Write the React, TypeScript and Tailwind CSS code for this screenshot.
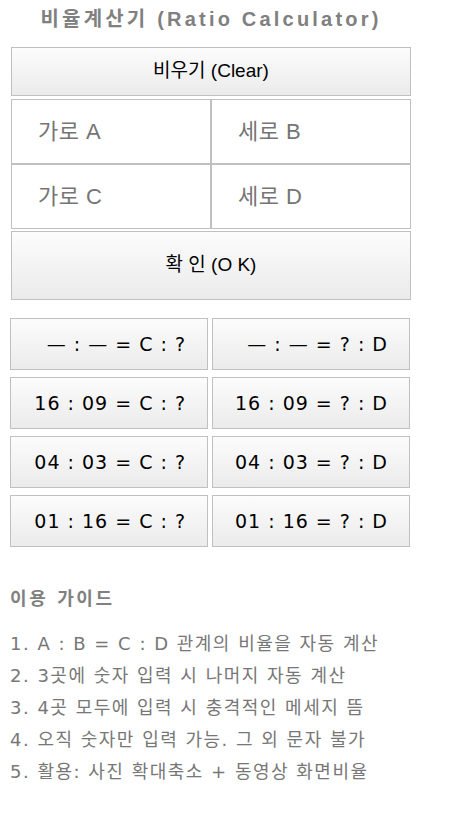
const ratios = [
  { left: '— : — = C : ?', right: '— : — = ? : D' },
  { left: '16 : 09 = C : ?', right: '16 : 09 = ? : D' },
  { left: '04 : 03 = C : ?', right: '04 : 03 = ? : D' },
  { left: '01 : 16 = C : ?', right: '01 : 16 = ? : D' },
];

const guide = [
  '1. A : B = C : D 관계의 비율을 자동 계산',
  '2. 3곳에 숫자 입력 시 나머지 자동 계산',
  '3. 4곳 모두에 입력 시 충격적인 메세지 뜸',
  '4. 오직 숫자만 입력 가능. 그 외 문자 불가',
  '5. 활용: 사진 확대축소 + 동영상 화면비율',
];

const btn =
  'border border-[#c0c0c0] bg-gradient-to-b from-[#fcfcfc] to-[#ebebeb] text-black';

function Field({ placeholder }: { placeholder: string }) {
  return (
    <input
      placeholder={placeholder}
      className="h-[65px] w-full border border-[#c0c0c0] bg-white pl-[26px] text-[22px] tracking-[0.5px] text-black outline-none placeholder:text-[#757575] [font-family:'Liberation_Sans','Noto_Sans_CJK_KR',sans-serif]"
    />
  );
}

export default function App() {
  return (
    <div className="min-h-screen bg-white pl-[11px] pt-[5px]">
      <h1 className="w-[400px] text-center text-[20px] font-bold leading-[28px] tracking-[3.2px] text-[#808080] [font-family:'Liberation_Sans','Noto_Sans_CJK_KR',sans-serif]">
        비율계산기 (Ratio Calculator)
      </h1>

      <button
        className={`${btn} mt-[14px] block h-[49px] w-[400px] text-[19px] [font-family:'Liberation_Sans','Noto_Sans_CJK_KR',sans-serif]`}
      >
        비우기 (Clear)
      </button>

      <div className="mt-[3px] grid w-[400px] grid-cols-2">
        <Field placeholder="가로 A" />
        <Field placeholder="세로 B" />
        <Field placeholder="가로 C" />
        <Field placeholder="세로 D" />
      </div>

      <button
        className={`${btn} mt-[2px] block h-[69px] w-[400px] text-[19px] [font-family:'Liberation_Sans','Noto_Sans_CJK_KR',sans-serif]`}
      >
        확 인 (O K)
      </button>

      <div className="-ml-[1px] mt-[18px] grid grid-cols-[198px_198px] gap-x-[4px] gap-y-[7px]">
        {ratios.map((r) => (
          <div key={r.left} className="contents">
            <button
              className={`${btn} flex h-[52px] items-center justify-end pr-[21px] text-[19px] tracking-[1px] [font-family:'DejaVu_Sans',sans-serif]`}
            >
              {r.left}
            </button>
            <button
              className={`${btn} flex h-[52px] items-center justify-end pr-[21px] text-[19px] tracking-[1px] [font-family:'DejaVu_Sans',sans-serif]`}
            >
              {r.right}
            </button>
          </div>
        ))}
      </div>

      <div className="-ml-[1px] mt-[40px] [font-family:'DejaVu_Sans','Noto_Sans_CJK_KR',sans-serif]">
        <h2 className="text-[18px] font-bold leading-[24px] tracking-[2.6px] text-[#808080]">
          이용 가이드
        </h2>
        <ul className="mt-[17px] text-[18px] leading-[32px] tracking-[1.5px] text-[#777777]">
          {guide.map((g) => (
            <li key={g}>{g}</li>
          ))}
        </ul>
      </div>
    </div>
  );
}
